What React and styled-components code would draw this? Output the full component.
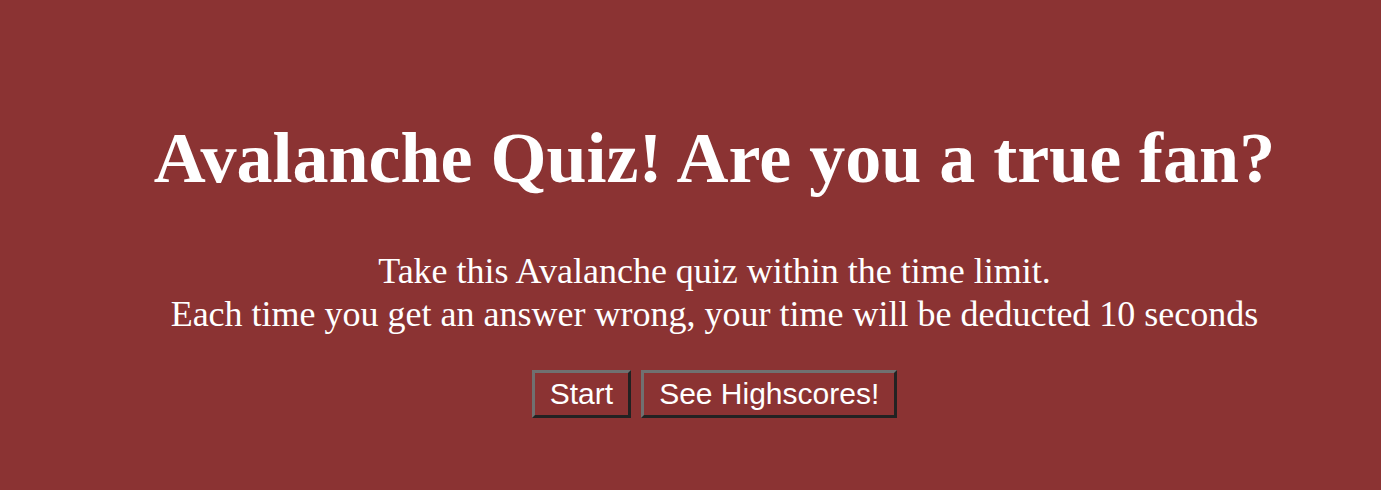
import styled, { createGlobalStyle } from "styled-components";

const GlobalStyle = createGlobalStyle`
  html, body {
    margin: 0;
    background-color: #8b3333;
  }
  body {
    font-family: "Liberation Serif", "Times New Roman", serif;
    color: white;
  }
`;

const Container = styled.main`
  box-sizing: border-box;
  height: 100vh;
  overflow: hidden;
  padding: 100px 0 0 48px;
  display: flex;
  flex-direction: column;
  align-items: center;
  text-align: center;
`;

const Title = styled.h1`
  font-size: 72px;
  font-weight: bold;
  margin: 17px 0 0;
`;

const Intro = styled.p`
  font-size: 36px;
  line-height: 1.2;
  margin: 50px 0 0;
`;

const Buttons = styled.div`
  display: flex;
  gap: 10px;
  margin-top: 34px;
`;

const Button = styled.button`
  font-family: "Liberation Sans", Arial, sans-serif;
  font-size: 30px;
  color: white;
  background-color: transparent;
  border: 3px solid;
  border-color: #707070 #222 #222 #707070;
  padding: 4px 15px;
  cursor: pointer;
`;

const App = () => {
  return (
    <Container>
      <GlobalStyle />
      <Title>Avalanche Quiz! Are you a true fan?</Title>
      <Intro>
        Take this Avalanche quiz within the time limit.
        <br />
        Each time you get an answer wrong, your time will be deducted 10 seconds
      </Intro>
      <Buttons>
        <Button>Start</Button>
        <Button>See Highscores!</Button>
      </Buttons>
    </Container>
  );
};

export default App;
